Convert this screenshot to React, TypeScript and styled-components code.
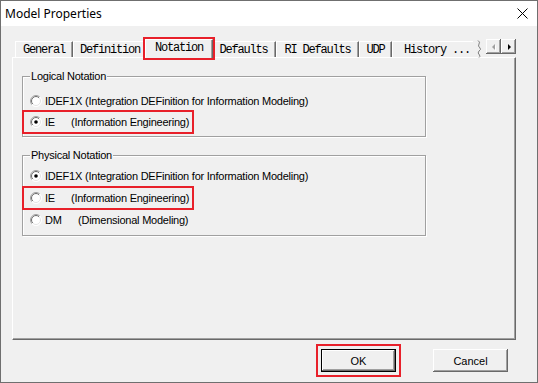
import React from 'react';
import styled, { createGlobalStyle, css } from 'styled-components';

// Styles

const GlobalStyle = createGlobalStyle`
  html, body {
    margin: 0;
    padding: 0;
    background: #fff;
  }
  body {
    font-family: "Liberation Sans", Arial, sans-serif;
  }
`;

const RED = '#e8202a';

const Window = styled.div`
  width: 538px;
  height: 383px;
  box-sizing: border-box;
  border: 1px solid #6f6f6f;
  background: #f0f0f0;
  display: flex;
  flex-direction: column;
`;

const TitleBar = styled.header`
  height: 25px;
  flex: none;
  background: #fff;
  display: flex;
  align-items: center;
  justify-content: space-between;
  padding: 0 9px 0 4px;
  font-family: "Noto Sans", "Open Sans", sans-serif;
  font-size: 12px;
  color: #000;
`;

const Body = styled.div`
  flex: 1;
  display: flex;
  flex-direction: column;
  padding: 12px 21px 0 11px;
`;

const TabStrip = styled.div`
  display: flex;
  align-items: flex-start;
  height: 20px;
  margin-bottom: -1px;
  position: relative;
  z-index: 1;
`;

const TabList = styled.div`
  display: flex;
  align-items: flex-end;
  width: 461px;
  height: 100%;
  padding-left: 3px;
`;

const Tab = styled.div<{ $w: number; $active?: boolean; $cut?: boolean }>`
  flex: none;
  box-sizing: border-box;
  width: ${(p) => p.$w}px;
  height: 16px;
  margin-bottom: 1px;
  border-top: 1px solid #fff;
  border-left: 1px solid #fff;
  border-right: 1px solid #696969;
  box-shadow: inset -1px 0 #a0a0a0;
  background: #f0f0f0;
  display: flex;
  align-items: center;
  justify-content: center;
  font-family: "Liberation Mono", "DejaVu Sans Mono", monospace;
  font-size: 12px;
  letter-spacing: -1.2px;
  color: #000;
  white-space: nowrap;

  ${(p) =>
    p.$cut &&
    css`
      border-right: none;
      box-shadow: none;
      justify-content: flex-start;
      padding-left: 11px;
      overflow: hidden;
    `}

  ${(p) =>
    p.$active &&
    css`
      width: ${p.$w + 4}px;
      height: 19px;
      margin: 0 -2px;
      position: relative;
      z-index: 2;
      padding-bottom: 2px;
      outline: 2px solid ${RED};
      outline-offset: 0;
    `}
`;

const Squiggle = styled.svg`
  flex: none;
  margin-top: 2px;
`;

const ScrollButtons = styled.div`
  display: flex;
  margin-left: 4px;
  margin-top: 1px;
`;

const ScrollButton = styled.div`
  width: 15px;
  height: 15px;
  box-sizing: border-box;
  background: #f0f0f0;
  box-shadow: inset -1px -1px #696969, inset 1px 1px #fff, inset -2px -2px #a0a0a0;
  display: flex;
  align-items: center;
  justify-content: center;
`;

const Panel = styled.section`
  height: 283px;
  box-sizing: border-box;
  border-top: 1px solid #fff;
  border-left: 1px solid #fff;
  border-right: 1px solid #696969;
  border-bottom: 1px solid #696969;
  box-shadow: inset -1px -1px 0 #a0a0a0;
  padding: 11px 0 0 9px;
  display: flex;
  flex-direction: column;
  gap: 11px;
`;

const Group = styled.fieldset<{ $padTop: number; $padBottom: number; $gap: number }>`
  margin: 0;
  width: 404px;
  box-sizing: border-box;
  border: 1px solid #a0a0a0;
  box-shadow: inset 1px 1px 0 #fff, 1px 1px 0 #fff;
  padding: ${(p) => p.$padTop}px 0 ${(p) => p.$padBottom}px 1px;
  display: flex;
  flex-direction: column;
  gap: ${(p) => p.$gap}px;
  font-size: 11px;
  letter-spacing: -0.24px;
  color: #000;
`;

const Legend = styled.legend`
  margin-left: 6px;
  padding: 0 1px;
  line-height: 14px;
  background: #f0f0f0;
`;

const Row = styled.div<{ $marked?: boolean }>`
  display: flex;
  align-items: center;
  width: fit-content;
  height: 20px;
  padding: 0 3px 0 6px;
  gap: 3px;
  white-space: nowrap;
  ${(p) =>
    p.$marked &&
    css`
      outline: 2px solid ${RED};
    `}
`;

const Code = styled.span<{ $w?: number }>`
  display: inline-block;
  ${(p) => (p.$w ? `width: ${p.$w}px;` : 'margin-right: 3px;')}
`;

const Footer = styled.footer`
  display: flex;
  justify-content: flex-end;
  gap: 37px;
  padding: 9px 8px 0 0;
`;

const Button = styled.button<{ $default?: boolean; $marked?: boolean }>`
  width: 75px;
  height: 23px;
  box-sizing: border-box;
  background: #f0f0f0;
  border: none;
  padding: 0;
  font-family: "Liberation Sans", Arial, sans-serif;
  font-size: 11px;
  color: #000;
  box-shadow: inset -1px -1px #696969, inset 1px 1px #fff, inset -2px -2px #a0a0a0;
  ${(p) =>
    p.$default &&
    css`
      border: 1px solid #000;
    `}
  ${(p) =>
    p.$marked &&
    css`
      outline: 2px solid ${RED};
      outline-offset: 3px;
    `}
`;

// Drawings

function CloseIcon(): JSX.Element {
  return (
    <svg width="11" height="11" viewBox="0 0 11 11">
      <path d="M0.5 0.5 L10.5 10.5 M10.5 0.5 L0.5 10.5" stroke="#000" strokeWidth="1" fill="none" />
    </svg>
  );
}

function RadioMark({ checked }: { checked?: boolean }): JSX.Element {
  return (
    <svg width="12" height="12" viewBox="0 0 12 12">
      <defs>
        <linearGradient id="radio-outer" x1="0" y1="0" x2="12" y2="12" gradientUnits="userSpaceOnUse">
          <stop offset="0.5" stopColor="#a0a0a0" />
          <stop offset="0.5" stopColor="#ffffff" />
        </linearGradient>
        <linearGradient id="radio-inner" x1="0" y1="0" x2="12" y2="12" gradientUnits="userSpaceOnUse">
          <stop offset="0.5" stopColor="#696969" />
          <stop offset="0.5" stopColor="#e3e3e3" />
        </linearGradient>
      </defs>
      <circle cx="6" cy="6" r="5.5" fill="#fff" stroke="url(#radio-outer)" />
      <circle cx="6" cy="6" r="4.5" fill="#fff" stroke="url(#radio-inner)" />
      {checked && <circle cx="6" cy="6" r="1.8" fill="#000" />}
    </svg>
  );
}

function Arrow({ dir, disabled }: { dir: 'left' | 'right'; disabled?: boolean }): JSX.Element {
  const d = dir === 'left' ? 'M5 2 L5 8 L2 5 Z' : 'M3 2 L3 8 L6 5 Z';
  return (
    <svg width="8" height="10" viewBox="0 0 8 10">
      {disabled && <path d={d} transform="translate(1 1)" fill="#fff" />}
      <path d={d} fill={disabled ? '#a0a0a0' : '#000'} />
    </svg>
  );
}

interface TabType {
  label: string;
  width: number;
  active?: boolean;
  cut?: boolean;
}

const tabs: TabType[] = [
  { label: 'General', width: 58 },
  { label: 'Definition', width: 74 },
  { label: 'Notation', width: 64, active: true },
  { label: 'Defaults', width: 65 },
  { label: 'RI Defaults', width: 83 },
  { label: 'UDP', width: 33 },
  { label: 'History ...', width: 81, cut: true },
];

interface OptionType {
  code: string;
  codeWidth?: number;
  desc: string;
  checked?: boolean;
  marked?: boolean;
}

const IDEF1X_DESC = '(Integration DEFinition for Information Modeling)';

const logical: OptionType[] = [
  { code: 'IDEF1X', desc: IDEF1X_DESC },
  { code: 'IE', codeWidth: 26, desc: '(Information Engineering)', checked: true, marked: true },
];

const physical: OptionType[] = [
  { code: 'IDEF1X', desc: IDEF1X_DESC, checked: true },
  { code: 'IE', codeWidth: 26, desc: '(Information Engineering)', marked: true },
  { code: 'DM', codeWidth: 33, desc: '(Dimensional Modeling)' },
];

function Options({ items }: { items: OptionType[] }): JSX.Element {
  return (
    <>
      {items.map((o) => (
        <Row key={o.code} $marked={o.marked}>
          <RadioMark checked={o.checked} />
          <span>
            <Code $w={o.codeWidth}>{o.code}</Code>
            {o.desc}
          </span>
        </Row>
      ))}
    </>
  );
}

function App(): JSX.Element {
  return (
    <>
      <GlobalStyle />
      <Window>
        <TitleBar>
          <span>Model Properties</span>
          <CloseIcon />
        </TitleBar>
        <Body>
          <TabStrip>
            <TabList>
              {tabs.map((t) => (
                <Tab key={t.label} $w={t.width} $active={t.active} $cut={t.cut}>
                  {t.label}
                </Tab>
              ))}
            </TabList>
            <Squiggle width="6" height="18" viewBox="0 0 6 18">
              <path
                d="M2 0.5 Q4.5 2 3 4 Q1.5 6 4 8 Q5.5 9.5 3 11 Q1 13 3.5 15 Q4.5 16.5 3 17.5"
                stroke="#808080"
                fill="none"
              />
            </Squiggle>
            <ScrollButtons>
              <ScrollButton>
                <Arrow dir="left" disabled />
              </ScrollButton>
              <ScrollButton>
                <Arrow dir="right" />
              </ScrollButton>
            </ScrollButtons>
          </TabStrip>
          <Panel>
            <Group $padTop={8} $padBottom={4} $gap={1}>
              <Legend>Logical Notation</Legend>
              <Options items={logical} />
            </Group>
            <Group $padTop={4} $padBottom={5} $gap={2}>
              <Legend>Physical Notation</Legend>
              <Options items={physical} />
            </Group>
          </Panel>
          <Footer>
            <Button $default $marked>
              OK
            </Button>
            <Button>Cancel</Button>
          </Footer>
        </Body>
      </Window>
    </>
  );
}

export default App;
